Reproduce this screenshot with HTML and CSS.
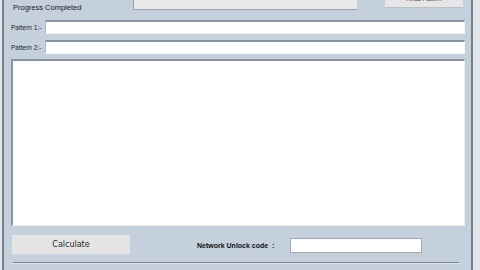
FILE: index.html
```html
<!DOCTYPE html>
<html lang="en">
<head>
  <meta charset="UTF-8">
  <title>Network Unlock Calculator</title>
  <link rel="stylesheet" href="styles.css">
</head>
<body>
  <div class="window">
    <!-- Status row -->
    <div class="status-row">
      <span class="status-label">Progress Completed</span>
      <div class="progress-box"></div>
      <button class="top-btn"><span>Read Pattern</span></button>
    </div>

    <div class="field-row">
      <label class="field-label">Pattern 1:-</label>
      <input type="text" class="field-input">
    </div>
    <div class="field-row">
      <label class="field-label">Pattern 2:-</label>
      <input type="text" class="field-input">
    </div>

    <textarea class="log"></textarea>

    <div class="action-row">
      <button class="calc-btn">Calculate</button>
      <span class="code-label">Network Unlock code &nbsp;:</span>
      <input type="text" class="code-input">
    </div>

    <div class="divider"></div>
  </div>
</body>
</html>
```

FILE: styles.css
```css
body {
  margin: 0;
  background: #dfe5eb;
  font-family: 'Liberation Sans', Arial, sans-serif;
  overflow: hidden;
}

.window {
  margin-left: 2px;
  width: 471px;
  height: 270px;
  background: #c4d0dc;
  border-left: 2px solid #75808c;
  border-right: 2px solid #75808c;
  padding-left: 7px;
  box-sizing: border-box;
}

.status-row {
  display: flex;
  align-items: flex-start;
  height: 20px;
}

.status-label {
  width: 120px;
  padding-left: 2px;
  padding-top: 3px;
  font-size: 7.5px;
  color: #1a1a1a;
}

.progress-box {
  width: 224px;
  height: 10px;
  background: #e8e8e8;
  border-left: 1px solid #9aa4ae;
  border-bottom: 1px solid #9aa4ae;
  box-sizing: border-box;
}

.top-btn {
  margin-left: 28px;
  width: 78px;
  height: 8px;
  padding: 0;
  background: #e6e6e6;
  border: none;
  border-bottom: 1px solid #b8c0c8;
  font-size: 6px;
  color: #333;
  overflow: hidden;
  display: flex;
  justify-content: center;
  align-items: flex-start;
}

.top-btn span {
  margin-top: -4px;
  line-height: 6px;
}

.field-row {
  display: flex;
  align-items: center;
  height: 14px;
  margin-bottom: 6px;
}

.field-label {
  width: 34px;
  font-size: 6.5px;
  color: #222;
}

.field-input {
  width: 420px;
  height: 14px;
  margin: 0;
  padding: 0;
  box-sizing: border-box;
  background: #fff;
  border: 1px solid #f4f4f4;
  border-top: 2px solid #8a949e;
  border-left: 1px solid #b0b8c0;
  outline: none;
}

.log {
  display: block;
  margin: -1px 0 0 0;
  width: 454px;
  height: 167px;
  padding: 0;
  box-sizing: border-box;
  resize: none;
  background: #fff;
  border: 1px solid #eef1f4;
  border-top: 2px solid #8a949e;
  border-left: 2px solid #8a949e;
  outline: none;
}

.action-row {
  display: flex;
  align-items: center;
  margin-top: 9px;
  height: 20px;
}

.calc-btn {
  margin-left: 1px;
  width: 118px;
  height: 20px;
  padding: 0;
  background: #e4e4e4;
  border: none;
  border-bottom: 1px solid #d0d6dc;
  font-family: 'DejaVu Sans', sans-serif;
  font-size: 8px;
  color: #2a2a2a;
}

.code-label {
  margin-left: 67px;
  width: 93px;
  font-size: 7px;
  font-weight: bold;
  color: #111;
}

.code-input {
  width: 132px;
  height: 15px;
  margin: 0;
  padding: 0;
  box-sizing: border-box;
  background: #fff;
  border: 1px solid #9ea8b2;
  outline: none;
}

.divider {
  margin: 7px 0 0 2px;
  width: 446px;
  height: 1px;
  background: #7c8690;
  border-bottom: 1px solid #dde3e9;
}
```
